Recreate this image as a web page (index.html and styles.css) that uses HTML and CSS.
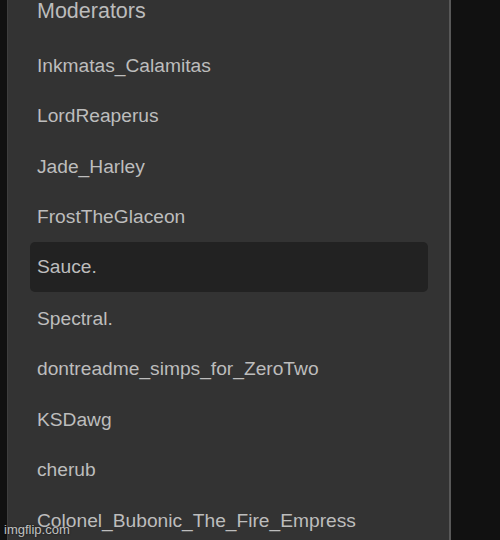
FILE: index.html
```html
<!DOCTYPE html>
<html lang="en">
<head>
    <meta charset="UTF-8">
    <meta name="viewport" content="width=device-width, initial-scale=1.0">
    <title>Moderators</title>
    <link rel="stylesheet" href="styles.css">
</head>
<body>
    <div class="page">
        <div class="panel">
            <h2 class="title">Moderators</h2>
            <ul class="mod-list">
                <li class="mod">Inkmatas_Calamitas</li>
                <li class="mod">LordReaperus</li>
                <li class="mod">Jade_Harley</li>
                <li class="mod">FrostTheGlaceon</li>
                <li class="mod active">Sauce.</li>
                <li class="mod">Spectral.</li>
                <li class="mod">dontreadme_simps_for_ZeroTwo</li>
                <li class="mod">KSDawg</li>
                <li class="mod">cherub</li>
                <li class="mod">Colonel_Bubonic_The_Fire_Empress</li>
            </ul>
        </div>
    </div>
    <div class="watermark">imgflip.com</div>
</body>
</html>
```

FILE: styles.css
```css
html, body {
    margin: 0;
    padding: 0;
    height: 540px;
    overflow: hidden;
}
body {
    font-family: "Liberation Sans", Arial, sans-serif;
    background-color: #111111;
    position: relative;
}
.page {
    padding-left: 7px;
}
.panel {
    width: 444px;
    height: 540px;
    overflow: hidden;
    background-color: #333333;
    border-left: 1px solid #3e3e3e;
    border-right: 2px solid #585858;
    padding: 0 21px 0 22px;
    box-sizing: border-box;
}
.title {
    margin: 0 0 17.8px 0;
    padding-left: 7px;
    font-size: 21.5px;
    line-height: 22px;
    font-weight: normal;
    color: #bcbcbc;
}
.mod-list {
    list-style: none;
    margin: 0;
    padding: 0;
}
.mod {
    height: 50.56px;
    line-height: 51px;
    padding-left: 7px;
    font-size: 19.2px;
    color: #bdbdbd;
    border-radius: 5px;
    white-space: nowrap;
}
.mod.active {
    background-color: #222222;
    height: 50px;
    line-height: 50px;
    margin-bottom: 0.56px;
}
.watermark {
    position: absolute;
    left: 4px;
    bottom: 3px;
    font-size: 13px;
    color: #e6e6e6;
    opacity: 0.8;
    text-shadow: 0 0 2px #000;
}
```
